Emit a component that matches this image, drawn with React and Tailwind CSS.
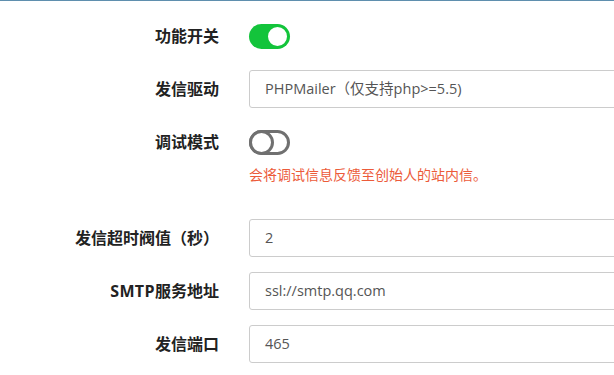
export default function App() {
  const font = { fontFamily: '"Open Sans", "Noto Sans CJK SC", sans-serif' };
  const Label = ({ children }) => (
    <div className="w-[219px] shrink-0 text-right text-[16px] font-bold text-[#222] leading-[38px]">{children}</div>
  );
  const Input = ({ value }) => (
    <div className="ml-[30px] w-[420px] shrink-0 h-[38px] border border-[#cccccc] rounded-[3px] pl-[15px] flex items-center text-[14.5px] text-[#555]">
      {value}
    </div>
  );
  const ToggleOn = () => (
    <div className="ml-[30px] w-[41px] h-[25px] rounded-full bg-[#13c43b] relative">
      <div className="absolute right-[1px] top-[1px] w-[23px] h-[23px] rounded-full bg-white border-[2px] border-[#13c43b]" />
    </div>
  );
  const ToggleOff = () => (
    <div className="ml-[30px] w-[41px] h-[25px] rounded-full border-[3px] border-[#707070] bg-white relative">
      <div className="absolute left-[-3px] top-[-3px] w-[25px] h-[25px] rounded-full border-[3px] border-[#707070] bg-white" />
    </div>
  );
  return (
    <div className="w-[614px] h-[375px] overflow-hidden bg-white" style={font}>
      <div className="h-[1px] bg-[#5f8fae]" />
      <div className="pt-[16px]">
        <div className="flex items-center h-[38px]">
          <Label>功能开关</Label>
          <ToggleOn />
        </div>
        <div className="flex items-center h-[38px] mt-[15px]">
          <Label>发信驱动</Label>
          <Input value="PHPMailer（仅支持php>=5.5)" />
        </div>
        <div className="flex items-center h-[38px] mt-[15px]">
          <Label>调试模式</Label>
          <ToggleOff />
        </div>
        <div className="ml-[249px] mt-[4px] h-[20px] leading-[20px] text-[14px] text-[#ec5b3a]">
          会将调试信息反馈至创始人的站内信。
        </div>
        <div className="flex items-center h-[38px] mt-[34px]">
          <Label>发信超时阀值（秒）</Label>
          <Input value="2" />
        </div>
        <div className="flex items-center h-[38px] mt-[15px]">
          <Label><span className="tracking-[0.4px]">SMTP</span>服务地址</Label>
          <Input value="ssl://smtp.qq.com" />
        </div>
        <div className="flex items-center h-[38px] mt-[15px]">
          <Label>发信端口</Label>
          <Input value="465" />
        </div>
      </div>
    </div>
  );
}
